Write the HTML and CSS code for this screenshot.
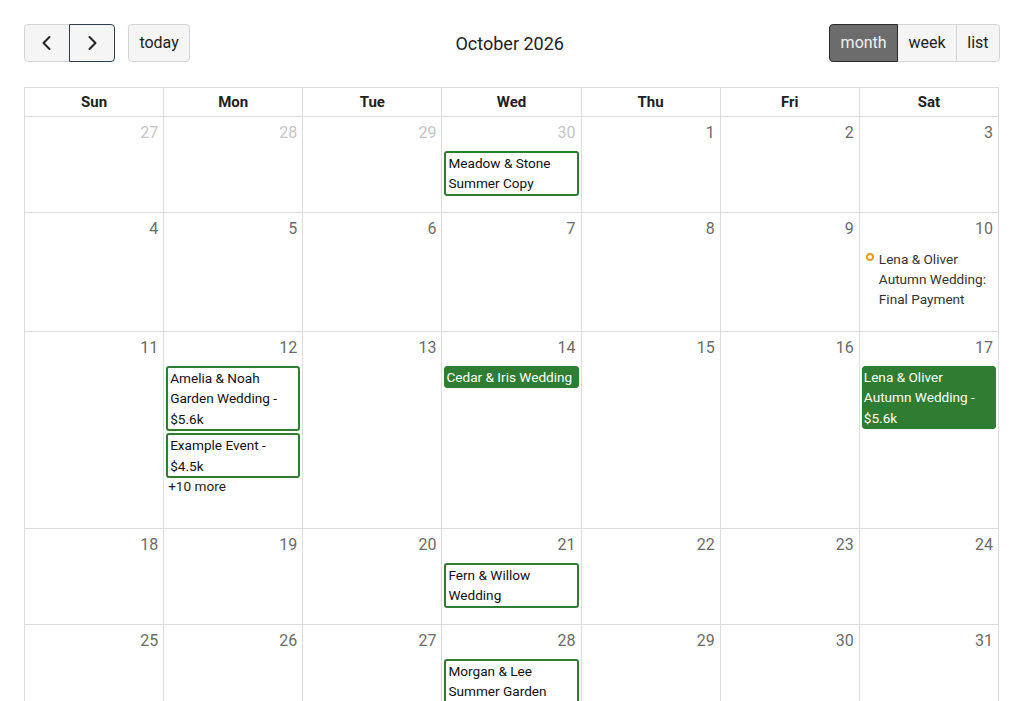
FILE: index.html
```html
<!DOCTYPE html>
<html lang="en">
<head>
<meta charset="utf-8">
<title>October 2026</title>
<link rel="stylesheet" href="styles.css">
</head>
<body>
<div class="cal">
  <div class="toolbar">
    <div class="left">
      <div class="group">
        <button class="btn icon-btn" aria-label="prev"><svg width="14" height="16" viewBox="0 0 14 16"><path d="M9.5 2 L3.5 8 L9.5 14" fill="none" stroke="#222" stroke-width="2" stroke-linecap="round" stroke-linejoin="round"/></svg></button>
        <button class="btn icon-btn focused" aria-label="next"><svg width="14" height="16" viewBox="0 0 14 16"><path d="M4.5 2 L10.5 8 L4.5 14" fill="none" stroke="#222" stroke-width="2" stroke-linecap="round" stroke-linejoin="round"/></svg></button>
      </div>
      <button class="btn single">today</button>
    </div>
    <h2 class="title">October 2026</h2>
    <div class="group">
      <button class="btn active">month</button>
      <button class="btn">week</button>
      <button class="btn">list</button>
    </div>
  </div>

  <div class="grid">
    <div class="head">
      <div>Sun</div><div>Mon</div><div>Tue</div><div>Wed</div><div>Thu</div><div>Fri</div><div>Sat</div>
    </div>

    <div class="week h96">
      <div class="day other"><div class="num">27</div></div>
      <div class="day other"><div class="num">28</div></div>
      <div class="day other"><div class="num">29</div></div>
      <div class="day other"><div class="num">30</div>
        <div class="ev outline">Meadow &amp; Stone Summer Copy</div>
      </div>
      <div class="day"><div class="num">1</div></div>
      <div class="day"><div class="num">2</div></div>
      <div class="day"><div class="num">3</div></div>
    </div>

    <div class="week h119">
      <div class="day"><div class="num">4</div></div>
      <div class="day"><div class="num">5</div></div>
      <div class="day"><div class="num">6</div></div>
      <div class="day"><div class="num">7</div></div>
      <div class="day"><div class="num">8</div></div>
      <div class="day"><div class="num">9</div></div>
      <div class="day"><div class="num">10</div>
        <div class="ev dot-ev"><span class="dot"></span><span class="dot-text">Lena &amp; Oliver Autumn Wedding: Final Payment</span></div>
      </div>
    </div>

    <div class="week h197">
      <div class="day"><div class="num">11</div></div>
      <div class="day"><div class="num">12</div>
        <div class="ev outline">Amelia &amp; Noah Garden Wedding - $5.6k</div>
        <div class="ev outline">Example Event - $4.5k</div>
        <div class="more">+10 more</div>
      </div>
      <div class="day"><div class="num">13</div></div>
      <div class="day"><div class="num">14</div>
        <div class="ev filled">Cedar &amp; Iris Wedding</div>
      </div>
      <div class="day"><div class="num">15</div></div>
      <div class="day"><div class="num">16</div></div>
      <div class="day"><div class="num">17</div>
        <div class="ev filled">Lena &amp; Oliver Autumn Wedding - $5.6k</div>
      </div>
    </div>

    <div class="week h96">
      <div class="day"><div class="num">18</div></div>
      <div class="day"><div class="num">19</div></div>
      <div class="day"><div class="num">20</div></div>
      <div class="day"><div class="num">21</div>
        <div class="ev outline">Fern &amp; Willow Wedding</div>
      </div>
      <div class="day"><div class="num">22</div></div>
      <div class="day"><div class="num">23</div></div>
      <div class="day"><div class="num">24</div></div>
    </div>

    <div class="week h119">
      <div class="day"><div class="num">25</div></div>
      <div class="day"><div class="num">26</div></div>
      <div class="day"><div class="num">27</div></div>
      <div class="day"><div class="num">28</div>
        <div class="ev outline">Morgan &amp; Lee Summer Garden Wedding</div>
      </div>
      <div class="day"><div class="num">29</div></div>
      <div class="day"><div class="num">30</div></div>
      <div class="day"><div class="num">31</div></div>
    </div>
  </div>
</div>
</body>
</html>
```

FILE: styles.css
```css
* { box-sizing: border-box; }
html, body { margin: 0; padding: 0; background: #fff; }
body {
  font-family: Roboto, "Liberation Sans", Arial, sans-serif;
  color: #222;
  overflow: hidden;
}
.cal { padding: 24px 25px 24px 24px; }

.toolbar {
  display: flex;
  align-items: center;
  justify-content: space-between;
  height: 38px;
  margin-bottom: 25px;
  margin-right: -1px;
}
.left { display: flex; align-items: center; gap: 13px; }
.group { display: flex; }
.btn {
  font-family: inherit;
  font-size: 16px;
  color: #222;
  background: #f5f5f5;
  border: 1px solid #d4d4d4;
  height: 38px;
  padding: 0 10.4px;
  margin: 0;
  line-height: 1;
  display: flex;
  align-items: center;
  justify-content: center;
  border-radius: 0;
}
.group .btn + .btn { margin-left: -1px; }
.group .btn:first-child { border-radius: 4px 0 0 4px; }
.group .btn:last-child { border-radius: 0 4px 4px 0; }
.btn.single { border-radius: 4px; }
.icon-btn { width: 46px; padding: 0; }
.icon-btn.focused { border-color: #2c3e50; position: relative; z-index: 1; }
.btn.active {
  background: #6c6c6c;
  color: #f2f2f2;
  border-color: #2b2b2b;
  position: relative;
  z-index: 1;
}
.title {
  margin: 0;
  font-size: 18px;
  font-weight: 400;
  color: #222;
}

.grid {
  border-top: 1px solid #ddd;
  border-left: 1px solid #ddd;
}
.head, .week {
  display: grid;
  grid-template-columns: repeat(7, 1fr);
}
.head > div {
  height: 29px;
  line-height: 28px;
  text-align: center;
  font-weight: 700;
  font-size: 15px;
  color: #212121;
  border-right: 1px solid #ddd;
  border-bottom: 1px solid #ddd;
}
.h96 { height: 96px; }
.h119 { height: 119px; }
.h197 { height: 197px; }
.day {
  border-right: 1px solid #ddd;
  border-bottom: 1px solid #ddd;
  min-width: 0;
}
.num {
  text-align: right;
  font-size: 16px;
  line-height: 24px;
  padding: 4px 5px 0 4px;
  margin-bottom: 6px;
  color: #6b6b6b;
}
.other .num { color: #c6c6c6; }

.ev {
  margin: 2px 2px 0 2px;
  font-size: 13.6px;
  line-height: 20.4px;
  border-radius: 3px;
}
.ev.outline {
  border: 2px solid #2e7d32;
  padding: 0 2px;
  color: #111;
  background: #fff;
}
.ev.filled {
  border: 1px solid #2e7d32;
  background: #2e7d32;
  color: #fff;
  padding: 0 4px 0 1px;
}
.dot-ev {
  display: flex;
  align-items: flex-start;
  padding-top: 2px;
  color: #333;
  line-height: 20px;
}
.dot {
  flex: none;
  width: 8px;
  height: 8px;
  border: 2px solid #e5a00d;
  border-radius: 50%;
  margin: 4px 5px 0 4px;
}
.dot-text { min-width: 0; }
.more {
  font-size: 13.6px;
  line-height: 20px;
  margin: -2px 0 0 4px;
  color: #222;
}
```
